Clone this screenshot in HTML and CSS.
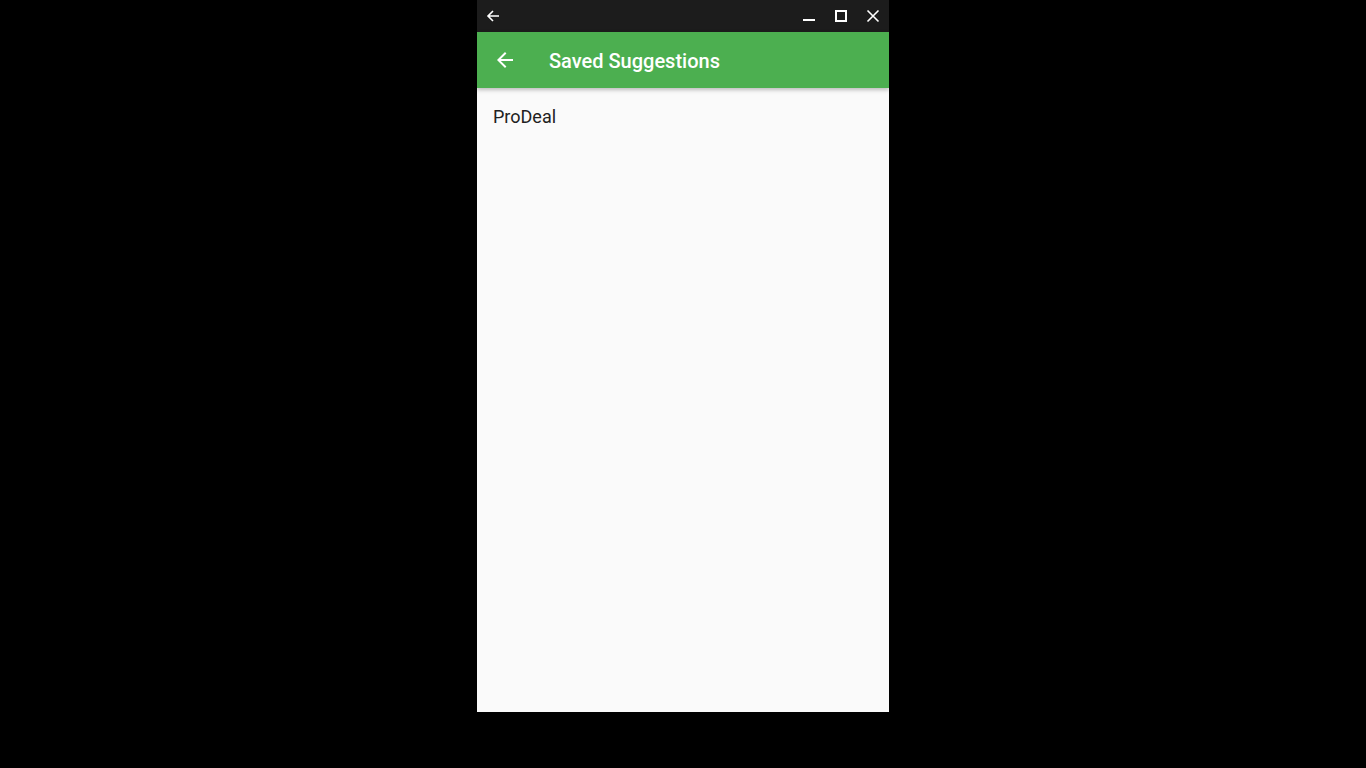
FILE: index.html
```html
<!DOCTYPE html>
<html>
<head>
<meta charset="utf-8">
<link rel="stylesheet" href="styles.css">
</head>
<body>
<div class="stage">
  <div class="window">
    <div class="titlebar">
      <div class="tb-back">
        <svg width="16" height="16" viewBox="0 0 16 16"><path d="M14 8H3M8 3L3 8l5 5" stroke="#fff" stroke-width="1.6" fill="none"/></svg>
      </div>
      <div class="tb-spacer"></div>
      <div class="tb-btn">
        <svg width="14" height="14" viewBox="0 0 14 14"><rect x="1" y="10" width="12" height="2" fill="#fff"/></svg>
      </div>
      <div class="tb-btn">
        <svg width="14" height="14" viewBox="0 0 14 14"><rect x="2" y="2" width="10" height="10" stroke="#fff" stroke-width="2" fill="none"/></svg>
      </div>
      <div class="tb-btn">
        <svg width="14" height="14" viewBox="0 0 14 14"><path d="M1.5 1.5L12.5 12.5M12.5 1.5L1.5 12.5" stroke="#fff" stroke-width="1.6" fill="none"/></svg>
      </div>
    </div>
    <div class="appbar">
      <div class="ab-back">
        <svg width="24" height="24" viewBox="0 0 24 24"><path d="M20 11H7.83l5.59-5.59L12 4l-8 8 8 8 1.41-1.41L7.83 13H20v-2z" fill="#fff"/></svg>
      </div>
      <div class="ab-title">Saved Suggestions</div>
    </div>
    <div class="content">
      <div class="tile">ProDeal</div>
    </div>
  </div>
</div>
</body>
</html>
```
FILE: styles.css
```css
html, body {
  margin: 0;
  padding: 0;
  background: #000;
  height: 100%;
}
.stage {
  display: flex;
  justify-content: center;
}
.window {
  width: 412px;
  height: 712px;
  display: flex;
  flex-direction: column;
  background: #fafafa;
  font-family: Roboto, "Noto Sans", sans-serif;
}
.titlebar {
  height: 32px;
  background: #1c1c1c;
  display: flex;
  align-items: center;
}
.tb-back {
  width: 32px;
  height: 32px;
  display: flex;
  align-items: center;
  justify-content: center;
}
.tb-spacer { flex: 1; }
.tb-btn {
  width: 32px;
  height: 32px;
  display: flex;
  align-items: center;
  justify-content: center;
}
.appbar {
  height: 56px;
  background: #4caf50;
  display: flex;
  align-items: center;
  box-shadow: 0 2px 4px rgba(0,0,0,0.25);
  position: relative;
  z-index: 1;
}
.ab-back {
  width: 56px;
  height: 56px;
  display: flex;
  align-items: center;
  justify-content: center;
}
.ab-title {
  margin-left: 16px;
  padding-top: 2px;
  color: #fff;
  font-size: 20px;
  font-weight: 500;
}
.content {
  flex: 1;
}
.tile {
  height: 56px;
  padding: 0 16px;
  display: flex;
  align-items: center;
  font-size: 18px;
  color: #212121;
}
```
